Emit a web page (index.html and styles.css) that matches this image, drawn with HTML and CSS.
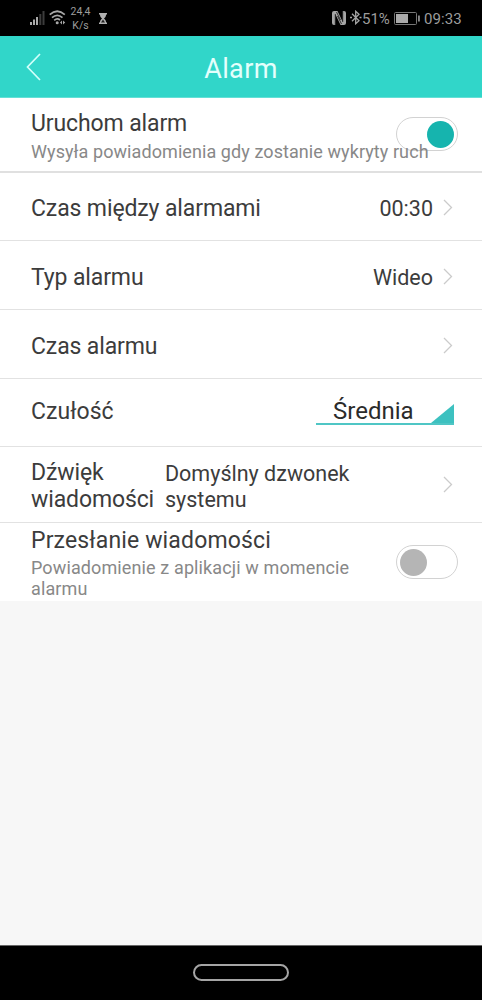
FILE: index.html
```html
<!DOCTYPE html>
<html lang="pl">
<head>
<meta charset="utf-8">
<title>Alarm</title>
<link rel="stylesheet" href="styles.css">
</head>
<body>
<div class="screen">
  <div class="status">
    <svg class="signal" width="15" height="14" viewBox="0 0 15 14"><path d="M0 11h2v3H0zM3 8.5h2V14H3zM6 6h2v8H6z" fill="#aaa"/><path d="M9.300 3h2v11h-2zM12.500 0h2v14h-2z" fill="#3c3c3c"/></svg>
    <svg class="wifi" width="17" height="15" viewBox="0 0 17 15" fill="none" stroke="#a8a8a8" stroke-width="1.700"><path d="M.7 4.700Q8.200-2.200 15.800 4.700M3 7.700Q8.200 3 13.500 7.700M5.200 10.300Q8.200 7.500 11 10"/><circle cx="8.200" cy="12.700" r="1.500" fill="#a8a8a8" stroke="none"/><path d="M11 12.500l2-2v4zM14 10.500l2.200 2-2.200 2z" fill="#a8a8a8" stroke="none"/></svg>
    <div class="speed"><span>24,4</span><span>K/s</span></div>
    <svg class="glass" width="8" height="11" viewBox="0 0 8 11"><path d="M0 0h8v1.500H7.200Q7 4 5 5.500 7 7 7.200 9.500H8V11H0V9.500H.8Q1 7 3 5.500 1 4 .8 1.500H0z" fill="#b0b0b0"/><path d="M4 6.500L6 9.500H2z" fill="#222"/></svg>
    <div class="status-right">
      <svg class="nfc" width="14" height="14" viewBox="0 0 14 14"><path d="M2 0Q0 0 0 2v10q0 2 2 2h1.500V3.500L8.500 14H12q2 0 2-2V2q0-2-2-2h-1.500v10.500L5.500 0z" fill="#a5a5a5"/><path d="M3.300 14V3M10.700 11V0M5.500 5l4 8M4.500 1l4 8" fill="none" stroke="#000" stroke-width=".7"/></svg>
      <svg class="bt" width="12" height="15" viewBox="0 0 12 15" fill="none" stroke="#a5a5a5" stroke-width="1.300"><path d="M2 3.700l7 7-3.300 3V1.300l3.300 3-7 7"/><path d="M0 7.500h2M9.500 7.500h2"/></svg>
      <span class="pct">51%</span>
      <svg class="battery" width="26" height="13" viewBox="0 0 26 13"><rect x=".5" y=".5" width="22" height="12" rx="1" fill="none" stroke="#777"/><path d="M2 2h12v9H2zM24.200 3.500h1.500v6h-1.500z" fill="#aaa"/></svg>
      <span class="clock">09:33</span>
    </div>
  </div>
  <div class="header">
    <svg class="back" width="16" height="28" viewBox="0 0 16 28"><path d="M14 1L1.500 14 14 27" fill="none" stroke="#d2fffa" stroke-width="1.700"/></svg>
    <h1>Alarm</h1>
  </div>
  <div class="list">
    <div class="row first">
      <div class="copy"><div class="label">Uruchom alarm</div><div class="sub one">Wysyła powiadomienia gdy zostanie wykryty ruch</div></div>
      <div class="toggle on"><i></i></div>
    </div>
    <div class="row interval"><div class="label">Czas między alarmami</div><div class="value">00:30</div><svg class="chev" width="10" height="17" viewBox="0 0 10 17"><path d="M1 1l7.500 7.500L1 16"/></svg></div>
    <div class="row"><div class="label">Typ alarmu</div><div class="value">Wideo</div><svg class="chev" width="10" height="17" viewBox="0 0 10 17"><path d="M1 1l7.500 7.500L1 16"/></svg></div>
    <div class="row"><div class="label">Czas alarmu</div><div class="value"></div><svg class="chev" width="10" height="17" viewBox="0 0 10 17"><path d="M1 1l7.500 7.500L1 16"/></svg></div>
    <div class="row level"><div class="label">Czułość</div>
      <div class="spinner"><span>Średnia</span><svg width="23" height="19" viewBox="0 0 23 19"><path d="M23 0v19H0z" fill="#3dc1c0"/></svg></div>
    </div>
    <div class="row sound"><div class="label">Dźwięk<br>wiadomości</div><div class="tone">Domyślny dzwonek<br>systemu</div><svg class="chev" width="10" height="17" viewBox="0 0 10 17"><path d="M1 1l7.500 7.500L1 16"/></svg></div>
    <div class="row last">
      <div class="copy"><div class="label">Przesłanie wiadomości</div><div class="sub two">Powiadomienie z aplikacji w momencie<br>alarmu</div></div>
      <div class="toggle"><i></i></div>
    </div>
  </div>
  <div class="nav"><div class="pill"></div></div>
</div>
</body>
</html>
```
FILE: styles.css
```css
* { box-sizing: border-box; }
body { margin: 0; font-family: Roboto, sans-serif; color: #3c3c3c; }
svg { display: block; flex: none; }
.screen { width: 482px; height: 1000px; display: flex; flex-direction: column; background: #f7f7f7; overflow: hidden; }
.status { height: 36px; flex: none; background: #000; color: #9c9c9c; display: flex; align-items: flex-start; padding: 0 20px 0 30px; }
.signal { margin-top: 11px; }
.wifi { margin: 10px 0 0 4px; }
.speed { margin: 5px 0 0 4px; width: 21px; display: flex; flex-direction: column; align-items: center; font-size: 10.500px; line-height: 14px; white-space: nowrap; }
.glass { margin: 13px 0 0 8px; }
.status-right { margin-left: auto; display: flex; }
.nfc { margin-top: 11px; }
.bt { margin: 10px 0 0 4px; }
.pct, .clock { font-size: 15px; line-height: 18px; margin-top: 10px; white-space: nowrap; }
.pct { width: 28px; }
.battery { margin: 12px 0 0 4px; }
.clock { width: 38px; margin-left: 4px; letter-spacing: .1px; }
.header { height: 62px; flex: none; background: #31d6c9; border-bottom: 1px solid #64e0d6; display: grid; grid-template-columns: 80px 1fr 80px; align-items: center; padding-top: 1px; }
.back { margin-left: 26px; }
h1 { margin: 3px 0 0; font-size: 27px; font-weight: 400; line-height: 32px; text-align: center; color: #e4fffc; letter-spacing: .4px; }
.list { flex: none; background: #fff; }
.row { height: 69px; padding: 2px 29px 0 31px; display: flex; align-items: center; border-bottom: 1px solid #e2e2e2; }
.label { font-size: 23px; line-height: 27px; letter-spacing: -.12px; padding-top: 2px; white-space: nowrap; }
.copy { width: 365px; flex: none; position: relative; z-index: 1; }
.copy .label { padding-top: 0; }
.sub { font-size: 18px; line-height: 21px; letter-spacing: .08px; color: #888; white-space: nowrap; }
.first { height: 75px; border-bottom: 2px solid #e0e0e0; padding-top: 2px; padding-right: 24px; }
.interval { height: 68px; padding-top: 1px; }
.one { margin-top: 4px; }
.toggle { width: 62px; height: 34px; flex: none; border: 1px solid #d2d2d2; border-radius: 17px; padding: 2px 3px; display: flex; align-items: center; }
.first .toggle { margin-top: -3px; }
.toggle i { width: 27px; height: 27px; border-radius: 50%; background: #b5b5b5; }
.toggle.on { justify-content: flex-end; }
.toggle.on i { background: #16b4ae; }
.value { margin-left: auto; font-size: 21.500px; line-height: 26px; padding-top: 3px; }
.chev { margin-left: 10px; fill: none; stroke: #cbcbcb; stroke-width: 1.300; }
.level { height: 68px; padding-top: 0; padding-right: 28px; }
.level .label { margin-top: -4px; letter-spacing: .05px; }
.spinner { margin: -5px 0 0 auto; width: 138px; height: 30px; border-bottom: 2px solid #4fc6c5; display: flex; align-items: flex-end; justify-content: space-between; padding-left: 17px; color: #2b2b2b; }
.spinner span { font-size: 24px; line-height: 24px; }
.sound { height: 76px; padding-top: 0; }
.sound .label { padding-top: 3px; }
.tone { width: 278px; margin-left: auto; font-size: 21.500px; line-height: 26px; padding-top: 4px; white-space: nowrap; }
.sound .chev { margin-left: 0; }
.last { height: 78px; padding-top: 0; border: 0; padding-right: 24px; }
.last .copy { padding-top: 2px; }
.last .label { letter-spacing: .15px; }
.last .sub { letter-spacing: .12px; }
.two { margin-top: 3px; }
.nav { height: 55px; margin-top: auto; background: #000; border-top: 1px solid #666; display: flex; justify-content: center; padding: 18px 0 0; }
.pill { width: 96px; height: 17px; border: 2px solid #a5a5a5; border-radius: 9px; }
```
